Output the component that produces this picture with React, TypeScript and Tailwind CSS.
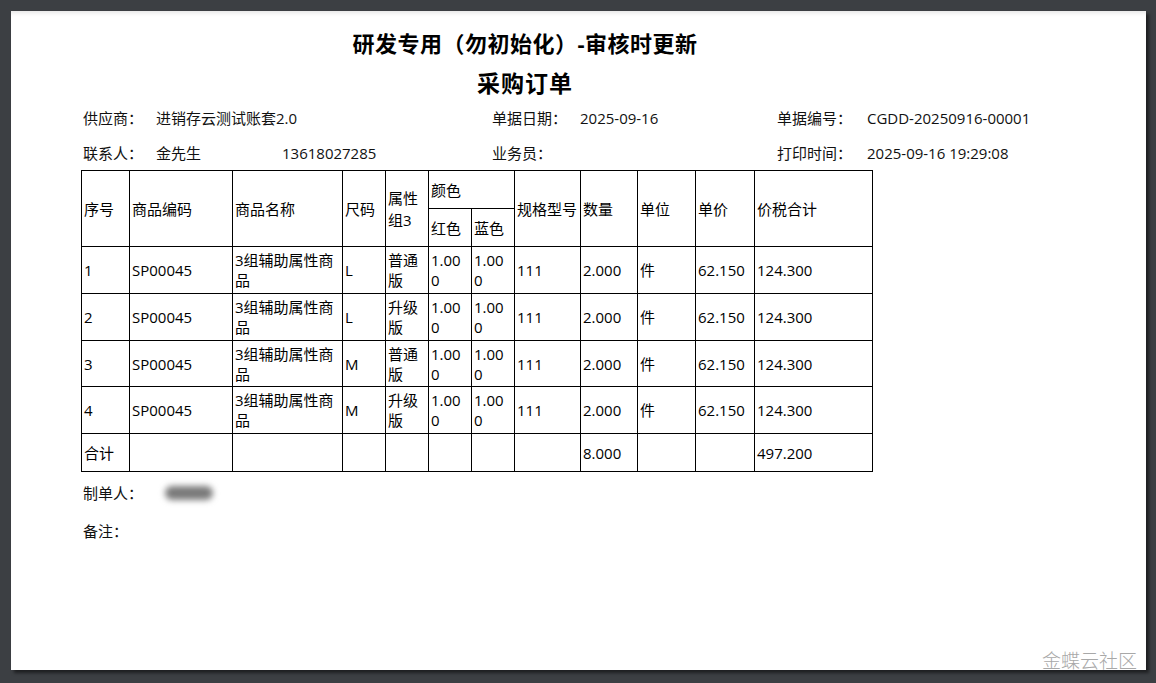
import type { ReactNode } from 'react'

type Row = {
  no: string
  code: string
  size: string
  attr: [string, string]
}

const rows: Row[] = [
  { no: '1', code: 'SP00045', size: 'L', attr: ['普通', '版'] },
  { no: '2', code: 'SP00045', size: 'L', attr: ['升级', '版'] },
  { no: '3', code: 'SP00045', size: 'M', attr: ['普通', '版'] },
  { no: '4', code: 'SP00045', size: 'M', attr: ['升级', '版'] }
]

const rowHeights = ['h-[47px]', 'h-[47px]', 'h-[46px]', 'h-[47px]']

const font = { fontFamily: '"Open Sans", "Noto Sans CJK SC", sans-serif' }

function Cell({ children, className = '' }: { children?: ReactNode; className?: string }) {
  return <td className={`border border-black px-[2px] py-0 align-middle leading-[20px] ${className}`}>{children}</td>
}

function Head({ children, className = '', rowSpan, colSpan }: { children?: ReactNode; className?: string; rowSpan?: number; colSpan?: number }) {
  return (
    <th rowSpan={rowSpan} colSpan={colSpan} className={`border border-black px-[2px] py-0 text-left align-middle font-normal leading-[22px] ${className}`}>
      {children}
    </th>
  )
}

function Info({ label, value, labelWidth }: { label: string; value?: string; labelWidth: string }) {
  return (
    <div className="flex">
      <span className={`${labelWidth} shrink-0`}>{label}</span>
      <span>{value}</span>
    </div>
  )
}

export default function App() {
  return (
    <div className="relative h-[683px] w-[1156px] overflow-hidden bg-[#3c3f43] pl-[11px] pt-[11px] text-[#111]" style={font}>
      <div className="h-[659px] w-[1135px] bg-white shadow-[3px_3px_3px_rgba(0,0,0,0.5),inset_0_5px_4px_-3px_rgba(0,0,0,0.1)]">
        <div className="w-[1028px] pt-[12px] text-center font-bold text-black">
          <div className="h-[40px] text-[22px] leading-[40px] tracking-[0.5px]">研发专用（勿初始化）-审核时更新</div>
          <div className="h-[40px] text-[23px] leading-[40px] tracking-[1px]">采购订单</div>
        </div>

        <div className="pl-[72px] text-[15px] leading-[20px]">
          <div className="flex h-[30px] items-center">
            <div className="w-[409px]">
              <Info label="供应商：" value="进销存云测试账套2.0" labelWidth="w-[73px]" />
            </div>
            <div className="w-[285px]">
              <Info label="单据日期：" value="2025-09-16" labelWidth="w-[88px]" />
            </div>
            <Info label="单据编号：" value="CGDD-20250916-00001" labelWidth="w-[90px]" />
          </div>
          <div className="flex h-[37px] items-start pt-[10px]">
            <div className="flex w-[409px]">
              <span className="w-[73px] shrink-0">联系人：</span>
              <span className="w-[126px] shrink-0">金先生</span>
              <span>13618027285</span>
            </div>
            <div className="w-[285px]">
              <Info label="业务员：" labelWidth="w-[88px]" />
            </div>
            <Info label="打印时间：" value="2025-09-16 19:29:08" labelWidth="w-[90px]" />
          </div>
        </div>

        <table className="ml-[70px] w-[791px] table-fixed border-collapse text-[15px] text-black">
          <colgroup>
            <col className="w-[48px]" />
            <col className="w-[103px]" />
            <col className="w-[110px]" />
            <col className="w-[43px]" />
            <col className="w-[43px]" />
            <col className="w-[43px]" />
            <col className="w-[43px]" />
            <col className="w-[66px]" />
            <col className="w-[57px]" />
            <col className="w-[58px]" />
            <col className="w-[59px]" />
            <col className="w-[118px]" />
          </colgroup>
          <thead>
            <tr className="h-[38px]">
              <Head rowSpan={2}>序号</Head>
              <Head rowSpan={2}>商品编码</Head>
              <Head rowSpan={2}>商品名称</Head>
              <Head rowSpan={2}>尺码</Head>
              <Head rowSpan={2}>
                属性
                <br />
                组3
              </Head>
              <Head colSpan={2}>颜色</Head>
              <Head rowSpan={2}>规格型号</Head>
              <Head rowSpan={2}>数量</Head>
              <Head rowSpan={2}>单位</Head>
              <Head rowSpan={2}>单价</Head>
              <Head rowSpan={2}>价税合计</Head>
            </tr>
            <tr className="h-[38px]">
              <Head>红色</Head>
              <Head>蓝色</Head>
            </tr>
          </thead>
          <tbody>
            {rows.map((row, index) => (
              <tr key={row.no} className={rowHeights[index]}>
                <Cell>{row.no}</Cell>
                <Cell>{row.code}</Cell>
                <Cell>
                  3组辅助属性商
                  <br />品
                </Cell>
                <Cell>{row.size}</Cell>
                <Cell>
                  {row.attr[0]}
                  <br />
                  {row.attr[1]}
                </Cell>
                <Cell>
                  1.00
                  <br />0
                </Cell>
                <Cell>
                  1.00
                  <br />0
                </Cell>
                <Cell>111</Cell>
                <Cell>2.000</Cell>
                <Cell>件</Cell>
                <Cell>62.150</Cell>
                <Cell>124.300</Cell>
              </tr>
            ))}
            <tr className="h-[38px]">
              <Cell>合计</Cell>
              <Cell />
              <Cell />
              <Cell />
              <Cell />
              <Cell />
              <Cell />
              <Cell />
              <Cell>8.000</Cell>
              <Cell />
              <Cell />
              <Cell>497.200</Cell>
            </tr>
          </tbody>
        </table>

        <div className="pl-[72px] text-[15px] leading-[20px]">
          <div className="mt-[11px] flex items-center">
            <span className="w-[82px] shrink-0">制单人：</span>
            <span className="h-[14px] w-[48px] rounded-full bg-[#7a7a7a] blur-[3px]" />
          </div>
          <div className="mt-[18px]">备注：</div>
        </div>
      </div>

      <div className="absolute left-[1042px] top-[650px] text-[19px] leading-[22px] font-light text-[#a8a8a8]">金蝶云社区</div>
    </div>
  )
}
